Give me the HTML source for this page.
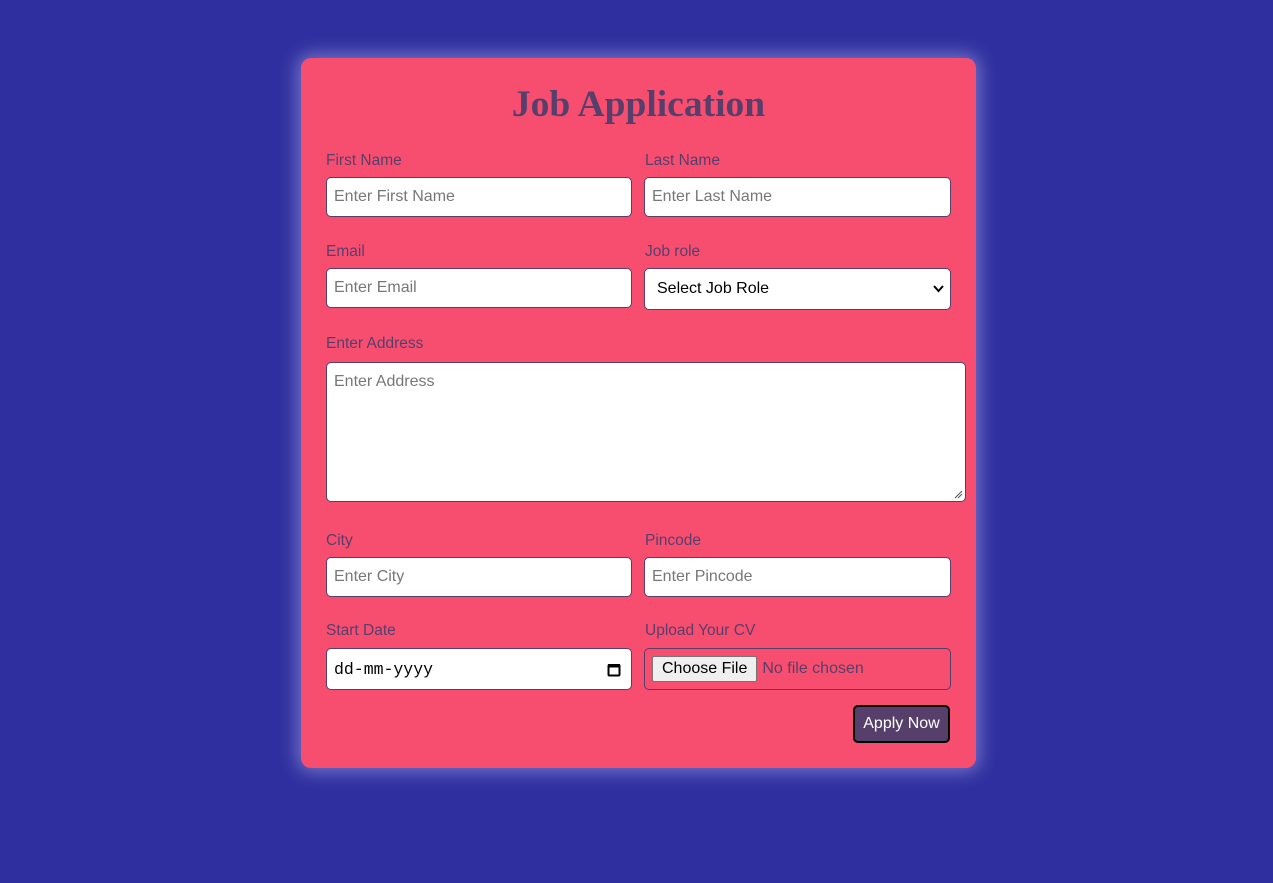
<!DOCTYPE html>
<html><head><style>
body{margin:0;width:1273px;height:883px;background:#2f2f9f;font-family:"Liberation Sans",sans-serif;position:relative;overflow:hidden}
.card{position:absolute;left:301px;top:58px;width:675px;height:710px;background:#f74e70;border-radius:10px;box-shadow:0 0 18px 4px rgba(200,200,255,.45)}
h1{position:absolute;left:301px;width:675px;top:83px;margin:0;text-align:center;font:bold 37.5px "Liberation Serif",serif;color:#573f6b}
.l{position:absolute;font-size:15.5px;color:#573f6b}
.i{position:absolute;box-sizing:border-box;background:#fff;border:1px solid #573f6b;border-radius:5px;font-size:16px;color:#777;padding-left:7px;display:flex;align-items:center}
.btn{position:absolute;left:853px;top:705px;width:97px;height:38px;box-sizing:border-box;background:#573f6b;border:2px solid #000;border-radius:5px;color:#fff;font-size:16px;display:flex;align-items:center;justify-content:center}
</style></head><body>
<div class="card"></div>
<h1>Job Application</h1>
<div class="l" style="left:326px;top:152px">First Name</div>
<div class="l" style="left:645px;top:152px">Last Name</div>
<div class="i" style="left:326px;top:177px;width:306px;height:40px">Enter First Name</div>
<div class="i" style="left:644px;top:177px;width:307px;height:40px">Enter Last Name</div>
<div class="l" style="left:326px;top:243px">Email</div>
<div class="l" style="left:645px;top:243px">Job role</div>
<div class="i" style="left:326px;top:268px;width:306px;height:40px">Enter Email</div>
<div class="i" style="left:644px;top:268px;width:307px;height:42px;color:#000;padding-left:12px">Select Job Role<svg style="position:absolute;right:6px;top:16px" width="11" height="8"><path d="M1 1L5.5 6L10 1" stroke="#000" stroke-width="2" fill="none"/></svg></div>
<div class="l" style="left:326px;top:335px">Enter Address</div>
<div class="i" style="left:326px;top:362px;width:640px;height:140px;align-items:flex-start;padding-top:10px">Enter Address<svg style="position:absolute;right:2px;bottom:2px" width="9" height="9"><path d="M1 8L8 1M4 8L8 4" stroke="#555" stroke-width="1"/></svg></div>
<div class="l" style="left:326px;top:532px">City</div>
<div class="l" style="left:645px;top:532px">Pincode</div>
<div class="i" style="left:326px;top:557px;width:306px;height:40px">Enter City</div>
<div class="i" style="left:644px;top:557px;width:307px;height:40px">Enter Pincode</div>
<div class="l" style="left:326px;top:622px">Start Date</div>
<div class="l" style="left:645px;top:622px">Upload Your CV</div>
<div class="i" style="left:326px;top:648px;width:306px;height:42px;color:#000;font-family:'Liberation Mono',monospace;font-size:16.5px">dd-mm-yyyy<svg style="position:absolute;right:10px;top:13px" width="14" height="15"><rect x="1.5" y="3" width="11" height="10.5" rx="1" fill="none" stroke="#000" stroke-width="2"/><rect x="1" y="2" width="12" height="3.5" fill="#000"/></svg></div>
<div class="i" style="left:644px;top:648px;width:307px;height:42px;background:none;color:#573f6b;padding-left:7px"><span style="display:inline-block;background:#efefef;border:1px solid #767676;border-radius:2px;color:#000;font-size:16px;padding:3px 9px;margin-right:5px">Choose File</span>No file chosen</div>
<div class="btn">Apply Now</div>
</body></html>
